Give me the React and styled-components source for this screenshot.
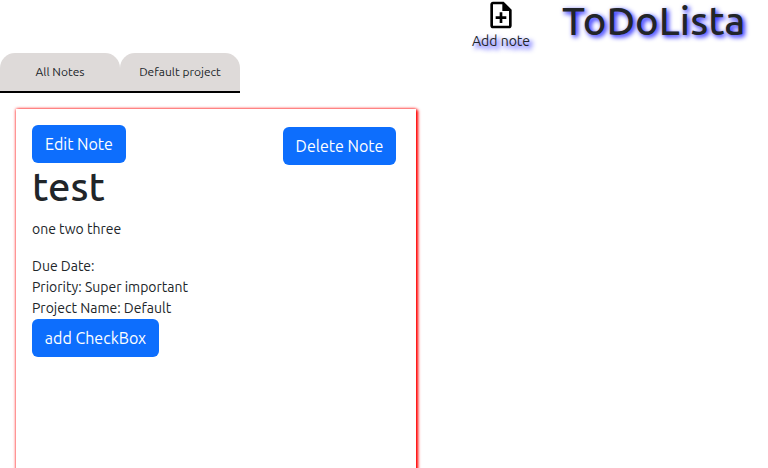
import React from 'react';
import styled, { createGlobalStyle } from 'styled-components';

const GlobalStyle = createGlobalStyle`
  *, *::before, *::after { box-sizing: border-box; }
  body {
    margin: 0;
    background: #fff;
    color: #212529;
    font: 400 14px/21px Ubuntu, "Noto Sans", sans-serif;
    overflow: hidden;
  }
  h1, p { margin: 0; }
`;

const Page = styled.div`
  height: 468px;
  overflow: hidden;
`;

const Header = styled.header`
  display: flex;
  justify-content: flex-end;
  height: 53px;
  padding-right: 20px;
`;

const AddNote = styled.div`
  display: flex;
  flex-direction: column;
  align-items: center;
  width: 58px;
  margin-right: 32px;
  white-space: nowrap;
  text-shadow: 3px 3px 5px blue;
  svg { display: block; width: 32px; height: 32px; margin-top: -1px; }
`;

const Brand = styled.h1`
  width: 186px;
  font-size: 40px;
  font-weight: 500;
  line-height: 42px;
  white-space: nowrap;
  text-shadow: 2px 2px 5px blue;
`;

const Tabs = styled.nav`
  display: flex;
`;

const Tab = styled.div`
  display: flex;
  align-items: center;
  justify-content: center;
  width: 120px;
  height: 40px;
  padding-bottom: 1px;
  background: #dedad9;
  border-bottom: 2px solid #000;
  border-radius: 15px 15px 0 0;
  font-size: 12px;
`;

/* The bottom border runs flat under the full width of the tabs. */

const Card = styled.article`
  width: 400px;
  height: 400px;
  margin: 16px 0 0 16px;
  padding: 16px 20px 16px 16px;
  box-shadow: 2px 1px 3px red, 0 0 3px red;
`;

const Actions = styled.div`
  display: flex;
  align-items: flex-start;
  justify-content: space-between;
  height: 38px;
`;

const Button = styled.button`
  display: flex;
  align-items: center;
  justify-content: center;
  width: ${({ $width }) => $width}px;
  height: 38px;
  margin: ${({ $drop = 0 }) => $drop}px 0 0;
  padding: 0;
  border: 0;
  border-radius: 6px;
  background: #0d6efd;
  color: #fff;
  font: 400 16px/24px Ubuntu, "Noto Sans", sans-serif;
`;

const NoteTitle = styled.h1`
  height: 48px;
  margin-bottom: 8px;
  font-size: 40px;
  font-weight: 500;
  line-height: 48px;
`;

const Description = styled.p`
  margin-bottom: 16px;
`;

function NoteAddIcon() {
  return (
    <svg viewBox="0 0 24 24" fill="#000" aria-hidden="true">
      <path d="M13 10h-2v3H8v2h3v3h2v-3h3v-2h-3zm1-8H6c-1.1 0-2 .9-2 2v16c0 1.1.89 2 1.99 2H18c1.1 0 2-.9 2-2V8l-6-6zm4 18H6V4h7v5h5v11z" />
    </svg>
  );
}

export default function App() {
  return (
    <Page>
      <GlobalStyle />
      <Header>
        <AddNote>
          <NoteAddIcon />
          <span>Add note</span>
        </AddNote>
        <Brand>ToDoLista</Brand>
      </Header>
      <Tabs>
        <Tab>All Notes</Tab>
        <Tab>Default project</Tab>
      </Tabs>
      <Card>
        <Actions>
          <Button $width={94}>Edit Note</Button>
          <Button $width={113} $drop={2}>Delete Note</Button>
        </Actions>
        <NoteTitle>test</NoteTitle>
        <Description>one two three</Description>
        <p>Due Date:</p>
        <p>Priority: Super important</p>
        <p>Project Name: Default</p>
        <Button $width={127}>add CheckBox</Button>
      </Card>
    </Page>
  );
}
